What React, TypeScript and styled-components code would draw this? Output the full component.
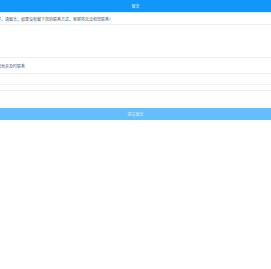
import React, { useState } from 'react'
import styled, { createGlobalStyle } from 'styled-components'

const GlobalStyle = createGlobalStyle`
    body{
        margin:0;
        background:#ffffff;
        font-family:"Noto Sans CJK SC", "Noto Sans", sans-serif;
    }
`

const App = () => {
    const [message, setMessage] = useState('')
    const [contact, setContact] = useState('')

    return (
        <Page>
            <GlobalStyle />
            <Header>留言</Header>
            <Notice>
                <span>您好，请留言，如果没有留下您的联系方式，客服将无法和您联系！</span>
            </Notice>
            <MessageBox value={message} onChange={(e) => setMessage(e.target.value)} />
            <Label>
                <span>我们也会及时联系</span>
            </Label>
            <ContactInput value={contact} onChange={(e) => setContact(e.target.value)} />
            <Divider />
            <SubmitRow>
                <SubmitButton type='button'>提交留言</SubmitButton>
            </SubmitRow>
        </Page>
    )
}

export default App

const Page = styled.div`
    width:271px;
    min-height:269px;
    background:#ffffff;
    display:flex;
    flex-direction:column;
`

const Header = styled.div`
    height:12px;
    background:#1296f7;
    border-bottom:1px solid #d8ecfb;
    color:#e8f4ff;
    font-size:4px;
    display:flex;
    align-items:center;
    justify-content:center;
`

const Notice = styled.div`
    height:11px;
    overflow:hidden;
    white-space:nowrap;
    display:flex;
    align-items:center;
    font-size:4px;
    color:#555555;
    border-bottom:1px solid #efefef;
    span{
        margin-left:-7px;
    }
`

const MessageBox = styled.textarea`
    height:32px;
    border:0;
    border-bottom:1px solid #efefef;
    padding:0;
    margin:0;
    resize:none;
    outline:none;
    display:block;
`

const Label = styled.div`
    height:14px;
    overflow:hidden;
    white-space:nowrap;
    display:flex;
    align-items:center;
    padding-top:1px;
    font-size:4px;
    color:#555555;
    border-bottom:1px solid #efefef;
    span{
        margin-left:-7px;
    }
`

const ContactInput = styled.input`
    height:10px;
    border:0;
    border-bottom:1px solid #f2f2f2;
    padding:0;
    margin:0;
    outline:none;
    display:block;
`

const Divider = styled.div`
    height:5px;
    border-bottom:1px solid #efefef;
`

const SubmitRow = styled.div`
    padding-top:17px;
`

const SubmitButton = styled.button`
    width:100%;
    height:12px;
    border:0;
    padding:0;
    background:#66bdfc;
    color:#dff0ff;
    font-size:4px;
    font-family:inherit;
    display:flex;
    align-items:center;
    justify-content:center;
`
